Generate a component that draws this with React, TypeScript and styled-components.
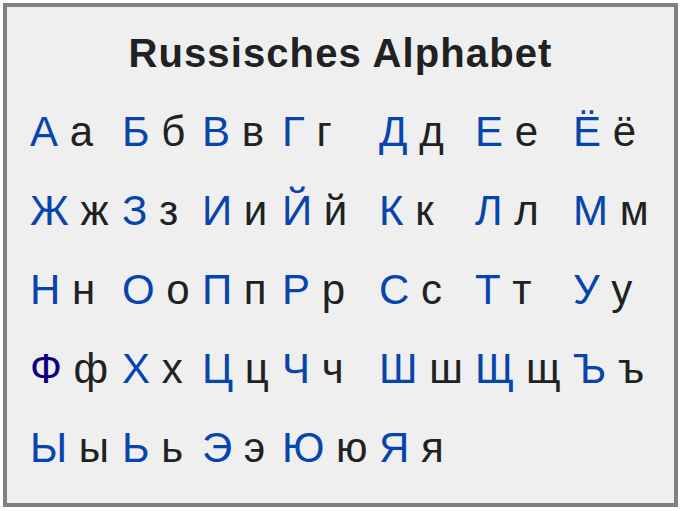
import React from "react";
import styled, { createGlobalStyle } from "styled-components";

const GlobalStyle = createGlobalStyle`
  html, body {
    margin: 0;
    padding: 0;
    background: #ffffff;
  }
  body {
    font-family: "Liberation Sans", Arial, sans-serif;
  }
`;

const Frame = styled.div`
  box-sizing: border-box;
  margin: 3px;
  width: 675px;
  height: 504px;
  border: 4px solid #808080;
  background: #efefef;
  padding: 25px 0 0 23px;
`;

const Title = styled.h1`
  margin: 0 0 18px 0;
  padding-right: 23px;
  font-family: "Liberation Sans", Arial, sans-serif;
  font-weight: bold;
  font-size: 40px;
  line-height: 42px;
  letter-spacing: 1.1px;
  color: #202122;
  text-align: center;
`;

const Grid = styled.div`
  display: grid;
  grid-template-columns: 92px 80px 80px 97px 96px 98px auto;
  grid-auto-rows: 79px;
  font-family: "Liberation Sans", Arial, sans-serif;
  font-size: 42px;
  line-height: 79px;
`;

const Cell = styled.div`
  white-space: nowrap;
`;

const Upper = styled.span<{ $visited?: boolean }>`
  color: ${(p) => (p.$visited ? "#0b0080" : "#0645ad")};
`;

const Lower = styled.span`
  color: #202122;
`;

const letters: [string, string][] = [
  ["А", "а"], ["Б", "б"], ["В", "в"], ["Г", "г"], ["Д", "д"], ["Е", "е"], ["Ё", "ё"],
  ["Ж", "ж"], ["З", "з"], ["И", "и"], ["Й", "й"], ["К", "к"], ["Л", "л"], ["М", "м"],
  ["Н", "н"], ["О", "о"], ["П", "п"], ["Р", "р"], ["С", "с"], ["Т", "т"], ["У", "у"],
  ["Ф", "ф"], ["Х", "х"], ["Ц", "ц"], ["Ч", "ч"], ["Ш", "ш"], ["Щ", "щ"], ["Ъ", "ъ"],
  ["Ы", "ы"], ["Ь", "ь"], ["Э", "э"], ["Ю", "ю"], ["Я", "я"],
];

export default function App() {
  return (
    <>
      <GlobalStyle />
      <Frame>
        <Title>Russisches Alphabet</Title>
        <Grid>
          {letters.map(([u, l]) => (
            <Cell key={u}>
              <Upper $visited={u === "Ф"}>{u}</Upper> <Lower>{l}</Lower>
            </Cell>
          ))}
        </Grid>
      </Frame>
    </>
  );
}
